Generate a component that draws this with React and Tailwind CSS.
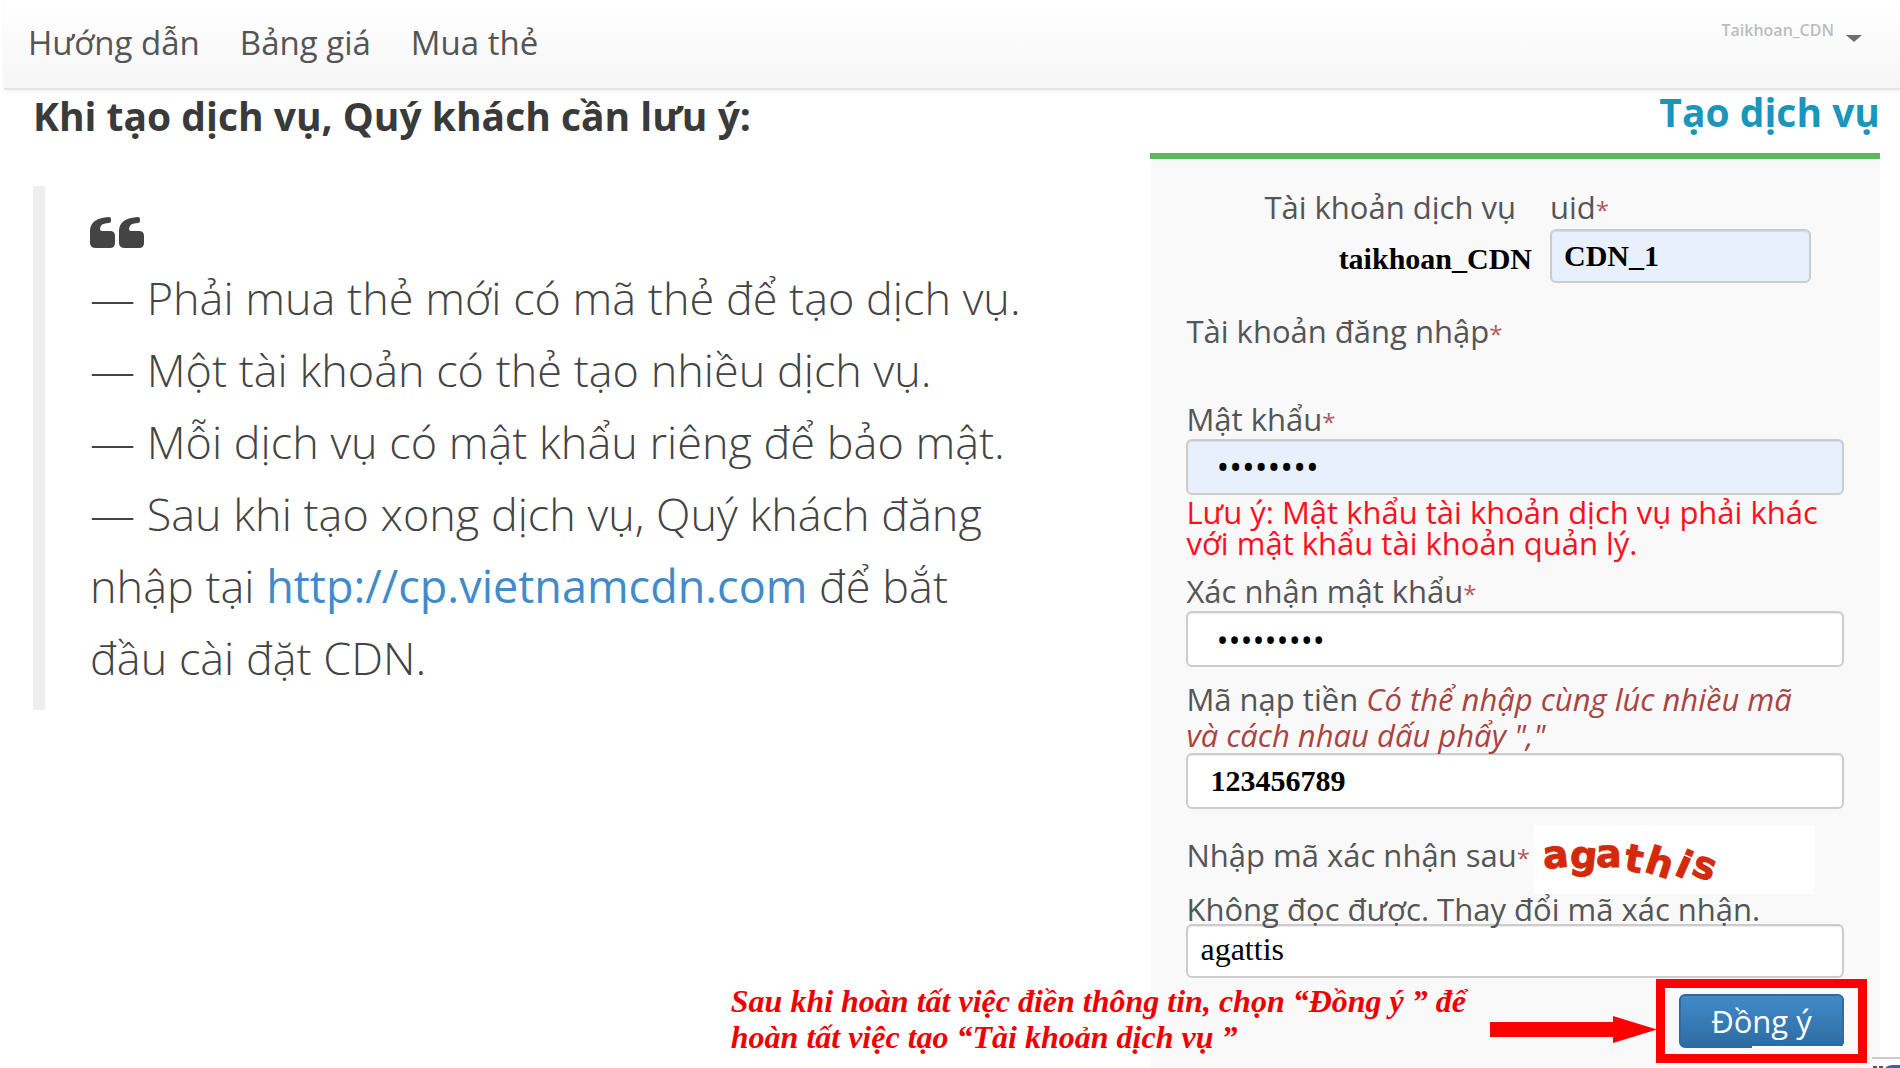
const fieldClass =
  "w-full rounded-md border-2 border-[#cccccc] shadow-[inset_0_1px_1px_rgba(0,0,0,0.08)] outline-none";

function Required() {
  return <span className="text-2xl leading-none text-[#b0595c]">*</span>;
}

function QuoteIcon() {
  return (
    <svg className="h-[31px] w-[54px] fill-[#444444]" viewBox="0 0 54 31" aria-hidden="true">
      <path d="M19 0q2 0 2 2v2q0 2-2 2Q10 6 10 12q0 2 2 2h8q5 0 5 5v7q0 5-5 5H6Q0 31 0 26V13Q1 1 19 0z" />
      <path d="M48 0q2 0 2 2v2q0 2-2 2Q39 6 39 12q0 2 2 2h8q5 0 5 5v7q0 5-5 5H35Q29 31 29 26V13Q30 1 48 0z" />
    </svg>
  );
}

function Captcha() {
  return (
    <svg className="h-[69px] w-[280px] bg-white" viewBox="0 0 280 69" role="img" aria-label="agathis">
      <text
        className="fill-[#d42a0c] stroke-[#d42a0c] stroke-1 font-['DejaVu_Sans'] text-[38px] font-bold"
        x="10 35 62 89 109 139 156"
        y="44 42 42 45 46 49 49"
        rotate="-6 6 0 10 18 24 20"
      >
        agathis
      </text>
    </svg>
  );
}

function Header() {
  return (
    <header className="ml-1 flex h-[90px] items-start justify-between border-b-2 border-[#e4e4e4] bg-linear-to-b from-white to-[#f6f6f6] pr-[38px] pl-6 shadow-[0_2px_4px_rgba(0,0,0,0.06)]">
      <nav className="flex gap-10 pt-5 text-[33px] leading-[46px] text-[#555555]">
        <a href="#huong-dan">Hướng dẫn</a>
        <a href="#bang-gia">Bảng giá</a>
        <a href="#mua-the">Mua thẻ</a>
      </nav>
      <button type="button" className="flex items-center gap-3 pt-[18px] text-base font-semibold text-[#bdbdbd]">
        Taikhoan_CDN
        <svg className="mt-4 h-[7px] w-4 fill-[#6e6e6e]" viewBox="0 0 16 7" aria-hidden="true">
          <path d="M0 0h16L8 7z" />
        </svg>
      </button>
    </header>
  );
}

function Notes() {
  return (
    <section>
      <h2 className="text-[39px] leading-[52px] font-bold text-[#3a3a3a]">Khi tạo dịch vụ, Quý khách cần lưu ý:</h2>
      <blockquote className="mt-11 border-l-12 border-[#eeeeee] pt-1 pb-4 pl-[45px] text-[45px] leading-[72px] font-light whitespace-nowrap text-[#444444]">
        <div className="flex h-[72px] items-center pt-3">
          <QuoteIcon />
        </div>
        <p>— Phải mua thẻ mới có mã thẻ để tạo dịch vụ.</p>
        <p>— Một tài khoản có thẻ tạo nhiều dịch vụ.</p>
        <p>— Mỗi dịch vụ có mật khẩu riêng để bảo mật.</p>
        <p>
          — Sau khi tạo xong dịch vụ, Quý khách đăng
          <br />
          nhập tại{" "}
          <a href="http://cp.vietnamcdn.com" className="font-normal text-[#428bca]">
            http://cp.vietnamcdn.com
          </a>{" "}
          để bắt
          <br />
          đầu cài đặt CDN.
        </p>
      </blockquote>
    </section>
  );
}

function ServiceForm() {
  return (
    <section className="flex w-[39.5%] flex-col">
      <h2 className="mb-[19px] text-right text-[39px] leading-11 font-bold text-[#1a96bd]">Tạo dịch vụ</h2>
      <form className="flex-1 border-t-6 border-[#5cb85c] bg-[#f9f9f9] px-9 pt-7 pb-5 text-[31px] text-[#555555]">
        <div className="flex gap-[18px] pr-[33px]">
          <div className="flex-1 text-right">
            <div className="pr-4 leading-10">Tài khoản dịch vụ</div>
            <div className="pt-2 font-['Liberation_Serif',serif] text-[30px] leading-[48px] font-bold text-black">
              taikhoan_CDN
            </div>
          </div>
          <div className="w-[261px]">
            <label htmlFor="uid" className="block leading-10">
              uid
              <Required />
            </label>
            <input
              id="uid"
              defaultValue="CDN_1"
              className={`${fieldClass} mt-0.5 block h-[54px] bg-[#e8f0fe] px-3 font-['Liberation_Serif',serif] text-[30px] font-bold text-black`}
            />
          </div>
        </div>

        <div className="mt-7 leading-10">
          Tài khoản đăng nhập
          <Required />
        </div>

        <label htmlFor="password" className="mt-12 block leading-10">
          Mật khẩu
          <Required />
        </label>
        <input
          id="password"
          type="password"
          defaultValue="matkhau1"
          className={`${fieldClass} block h-14 bg-[#e8f0fe] px-7 text-[34px] text-black`}
        />
        <p className="mt-0.5 leading-[31px] text-[#ff0f1e]">
          Lưu ý: Mật khẩu tài khoản dịch vụ phải khác
          <br />
          với mật khẩu tài khoản quản lý.
        </p>

        <label htmlFor="confirm" className="mt-3 block leading-10">
          Xác nhận mật khẩu
          <Required />
        </label>
        <input
          id="confirm"
          type="password"
          defaultValue="matkhau12"
          className={`${fieldClass} block h-14 bg-white px-7 text-[32px] text-black`}
        />

        <label htmlFor="code" className="mt-3.5 block leading-9">
          Mã nạp tiền{" "}
          <em className="text-[#a94442]">
            Có thể nhập cùng lúc nhiều mã
            <br />
            và cách nhau dấu phẩy ","
          </em>
        </label>
        <input
          id="code"
          defaultValue="123456789"
          className={`${fieldClass} block h-14 bg-white px-[22px] font-['Liberation_Serif',serif] text-[30px] font-bold text-black`}
        />

        <div className="mt-4 flex items-center justify-between pr-[30px]">
          <label htmlFor="captcha" className="pb-2 whitespace-nowrap">
            Nhập mã xác nhận sau
            <Required />
          </label>
          <Captcha />
        </div>
        <a href="#captcha" className="block leading-[30px]">
          Không đọc được. Thay đổi mã xác nhận.
        </a>
        <input
          id="captcha"
          defaultValue="agattis"
          className={`${fieldClass} block h-[54px] bg-white px-3 pb-1 font-['Liberation_Serif',serif] text-[32px] text-black`}
        />

        <div className="mt-4 flex justify-end">
          <div className="relative">
            <button
              type="submit"
              className="block h-[54px] w-[165px] rounded-md border-2 border-[#2d6ca2] bg-linear-to-b from-[#428bca] to-[#2d6ca2] text-white"
            >
              Đồng ý
            </button>
            <span className="absolute right-0 bottom-0 h-0.5 w-[92px] bg-white" />
            <div className="pointer-events-none absolute -inset-x-[23px] -inset-y-[15px] border-9 border-[#ff0000]" />
            {/* callout pointing at the submit button */}
            <div className="absolute top-1/2 right-full mr-[22px] flex w-max -translate-y-1/2 items-center gap-6">
              <p className="pb-1 font-['Liberation_Serif',serif] text-[32px] leading-9 font-bold text-[#ee0000] italic">
                Sau khi hoàn tất việc điền thông tin, chọn “Đồng ý ” để
                <br />
                hoàn tất việc tạo “Tài khoản dịch vụ ”
              </p>
              <svg className="mt-4 h-[27px] w-[167px] fill-[#ff0000]" viewBox="0 0 167 27" aria-hidden="true">
                <path d="M0 6h123V0l44 13.5L123 27v-6H0z" />
              </svg>
            </div>
          </div>
        </div>
      </form>
    </section>
  );
}

export default function App() {
  return (
    <div className="relative flex min-h-screen flex-col overflow-hidden bg-white font-['Open_Sans','Noto_Sans',sans-serif]">
      <Header />
      <main className="flex flex-1 justify-between pr-5 pl-[33px]">
        <Notes />
        <ServiceForm />
      </main>
      <svg className="absolute right-0 bottom-0 h-3 w-7" viewBox="0 0 28 12" aria-hidden="true">
        <path d="M0 2h28" className="stroke-[#cccccc] stroke-2" />
        <path d="M1 11h4M7 11h4" className="stroke-[#555555] stroke-2" />
        <path d="M13 12q3-3 8-3h7v3z" className="fill-[#2d6ca2]" />
      </svg>
    </div>
  );
}
